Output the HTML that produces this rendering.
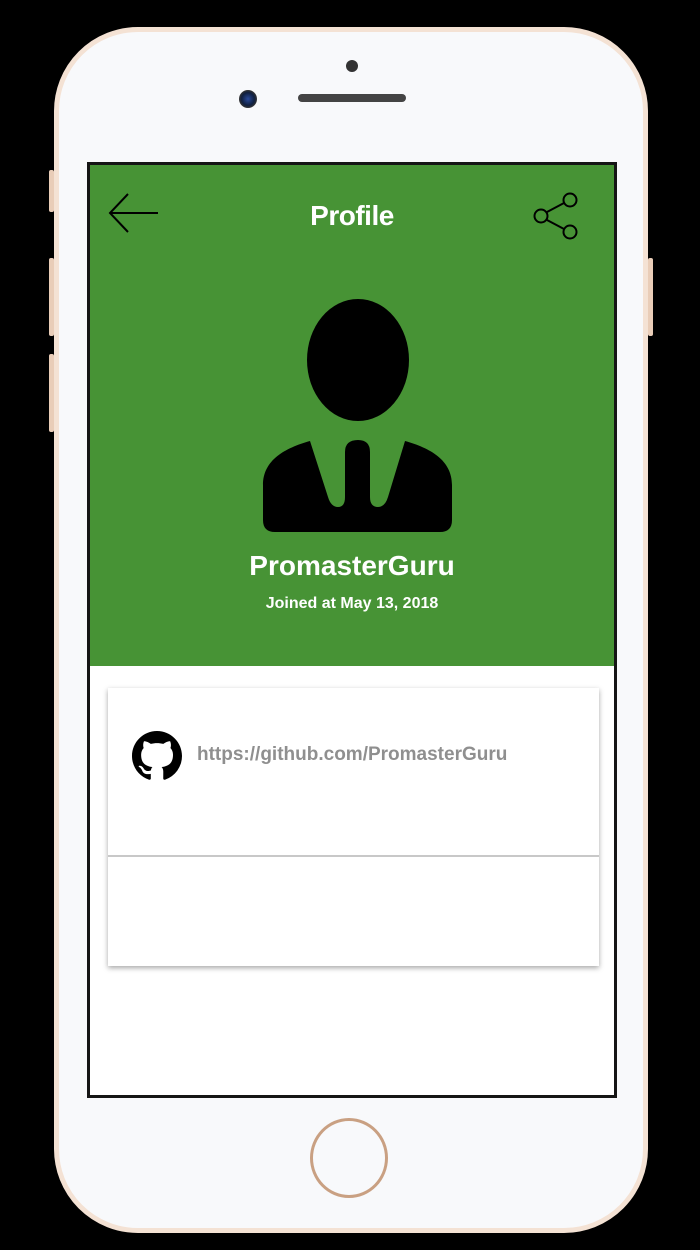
<!DOCTYPE html>
<html><head><meta charset="utf-8"><style>
html,body{margin:0;padding:0;background:#000;width:700px;height:1250px;overflow:hidden;font-family:"Liberation Sans",Roboto,sans-serif}
.phone{position:absolute;left:54px;top:27px;width:584px;height:1196px;border:5px solid #f4e2d4;border-radius:84px;background:#f8f9fb}
.btn{position:absolute;background:#e9cdb8;width:5px;border-radius:2px}
.screen{position:absolute;left:87px;top:162px;width:524px;height:930px;border:3px solid #151515;background:#fff;overflow:hidden}
.green{position:absolute;left:0;top:0;width:524px;height:501px;background:#479335}
.t{position:absolute;color:#fff;font-weight:bold;text-align:center;width:524px;left:0}
.card{position:absolute;left:18px;top:523px;width:491px;height:278px;background:#fff;box-shadow:0 2px 5px rgba(0,0,0,.35)}
</style></head><body>
<div class="btn" style="left:49px;top:170px;height:42px"></div>
<div class="btn" style="left:49px;top:258px;height:78px"></div>
<div class="btn" style="left:49px;top:354px;height:78px"></div>
<div class="btn" style="left:648px;top:258px;height:78px"></div>
<div class="phone"></div>
<div style="position:absolute;left:346px;top:60px;width:12px;height:12px;border-radius:50%;background:#333"></div>
<div style="position:absolute;left:298px;top:94px;width:108px;height:8px;border-radius:4px;background:#444"></div>
<div style="position:absolute;left:239px;top:90px;width:18px;height:18px;border-radius:50%;background:radial-gradient(circle,#2a4a9a 0,#102040 50%,#333 70%)"></div>
<div style="position:absolute;left:310px;top:1118px;width:78px;height:80px;border-radius:50%;border:3px solid #c9a082;box-sizing:border-box"></div>
<div class="screen">
 <div class="green">
  <svg width="524" height="501" style="position:absolute;left:0;top:0">
   <g fill="none" stroke="#000" stroke-width="2">
    <path d="M68,48 H20 M38,29 L20,48 L38,67"/>
    <circle cx="480" cy="35" r="6.5"/><circle cx="480" cy="67" r="6.5"/><circle cx="451" cy="51" r="6.5"/>
    <path d="M457,47 L474,38 M457,55 L474,64"/>
   </g>
   <g transform="translate(-90,-165)">
    <ellipse cx="358" cy="360" rx="51" ry="61" fill="#000"/>
    <path d="M263,485 C263,460 285,448 310,441 L328,497 Q331,507 338,507 Q345,507 345,497 L345,452 Q345,440 358,440 Q370,440 370,452 L370,497 Q370,507 378,507 Q385,507 388,497 L405,441 C430,448 452,460 452,485 L452,520 Q452,532 440,532 L275,532 Q263,532 263,520 Z" fill="#000"/>
   </g>
  </svg>
  <div class="t" style="top:35px;font-size:28px;line-height:32px;letter-spacing:-0.5px">Profile</div>
  <div class="t" style="top:385px;font-size:28px;line-height:32px">PromasterGuru</div>
  <div class="t" style="top:429px;font-size:16px;line-height:20px">Joined at May 13, 2018</div>
 </div>
 <div class="card">
  <svg width="50" height="50" viewBox="0 0 16 16" style="position:absolute;left:24px;top:43px"><path fill="#000" d="M8 0C3.58 0 0 3.58 0 8c0 3.54 2.29 6.530 5.47 7.59.4.07.55-.17.55-.38 0-.19-.01-.82-.01-1.49-2.01.37-2.53-.49-2.690-.94-.09-.23-.48-.94-.82-1.13-.28-.15-.68-.52-.01-.53.63-.01 1.08.58 1.23.82.72 1.21 1.87.87 2.33.66.07-.52.28-.87.51-1.07-1.78-.2-3.64-.89-3.64-3.95 0-.87.31-1.59.82-2.150-.08-.2-.36-1.02.08-2.12 0 0 .67-.21 2.2.82.64-.18 1.32-.27 2-.27.68 0 1.36.09 2 .27 1.53-1.04 2.2-.82 2.2-.82.44 1.1.16 1.92.08 2.12.51.56.82 1.27.82 2.15 0 3.07-1.87 3.75-3.65 3.95.29.25.54.73.54 1.48 0 1.07-.01 1.93-.01 2.2 0 .21.15.46.55.38A8.013 8.013 0 0016 8c0-4.42-3.58-8-8-8z"/></svg>
  <div style="position:absolute;left:89px;top:55px;font-size:19px;font-weight:bold;color:#8f8f8f;line-height:24px">https://github.com/PromasterGuru</div>
  <div style="position:absolute;left:0;top:167px;width:491px;height:2px;background:#c8c8c8"></div>
 </div>
</div>
</body></html>
